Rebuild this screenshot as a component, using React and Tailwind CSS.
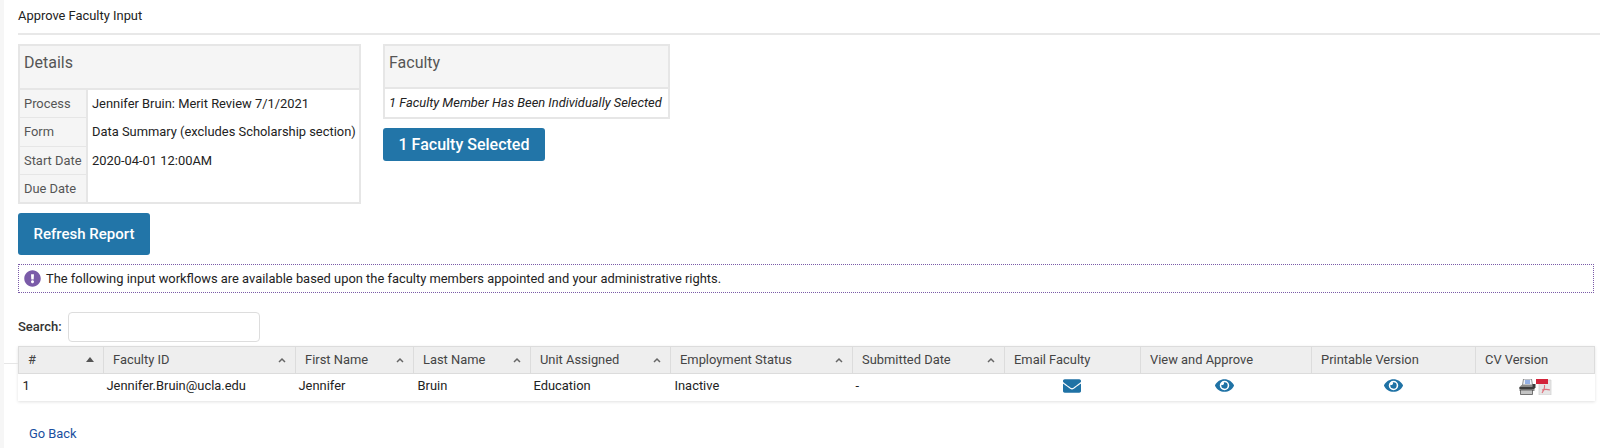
import { FaEnvelope, FaEye, FaExclamationCircle } from 'react-icons/fa';

const details = [
    ['Process', 'Jennifer Bruin: Merit Review 7/1/2021'],
    ['Form', 'Data Summary (excludes Scholarship section)'],
    ['Start Date', '2020-04-01 12:00AM'],
    ['Due Date', ''],
];

const columns = [
    { label: '#', width: 'w-[85px]', sort: 'active' },
    { label: 'Faculty ID', width: 'w-[192px]', sort: 'up' },
    { label: 'First Name', width: 'w-[118px]', sort: 'up' },
    { label: 'Last Name', width: 'w-[117px]', sort: 'up' },
    { label: 'Unit Assigned', width: 'w-[140px]', sort: 'up' },
    { label: 'Employment Status', width: 'w-[182px]', sort: 'up' },
    { label: 'Submitted Date', width: 'w-[152px]', sort: 'up' },
    { label: 'Email Faculty', width: 'w-[136px]' },
    { label: 'View and Approve', width: 'w-[171px]' },
    { label: 'Printable Version', width: 'w-[164px]' },
    { label: 'CV Version', width: 'w-[119px]' },
];

function PrinterIcon() {
    return (
        <svg width="18" height="16" viewBox="0 0 17 16">
            <path d="M5 0h8l1 6H4z" fill="#eef2f8" stroke="#666" strokeWidth="0.7" />
            <path d="M6.5 2h5M6.5 4h5" stroke="#3b6fd0" strokeWidth="1.2" />
            <path d="M1 8l2-2h11l2 2v4H1z" fill="#8a8a8a" />
            <path d="M14 5h3v4h-3z" fill="#3d3d3d" />
            <path d="M1 8h15v2H1z" fill="#3d3d3d" />
            <path d="M2 11h12v4.500H2z" fill="#c4c4c4" stroke="#444" strokeWidth="0.7" />
        </svg>
    );
}

function PdfIcon() {
    return (
        <svg width="16" height="16" viewBox="0 0 16 16">
            <path d="M3 1h12v15H3z" fill="#e6e6e6" stroke="#cfcfcf" strokeWidth="0.7" />
            <path d="M0 0h12v5H0z" fill="#d3233a" />
            <path d="M6 14c2-3 3-5 2.500-8M6 11c3-1 5-1 8 0" fill="none" stroke="#e0707c" strokeWidth="1.1" />
        </svg>
    );
}

function SortIcon({ sort }) {
    if (sort === 'active') {
        return <span className="w-0 h-0 border-x-[4px] border-x-transparent border-b-[5px] border-b-[#555]" />;
    }
    return (
        <svg width="8" height="6" viewBox="0 0 8 6">
            <path d="M1 5l3-3 3 3" fill="none" stroke="#666" strokeWidth="1.5" />
        </svg>
    );
}

export default function App() {
    return (
        <div className="relative h-[448px] overflow-hidden bg-white border-l-[4px] border-[#f6f6f6] pl-[14px] text-[12.9px] text-[#222] font-['Roboto',sans-serif]">
            {/* faint rule left of the table */}
            <div className="absolute left-0 top-[363px] w-[14px] h-px bg-[#e6e6e6]" />

            {/* Header */}
            <h1 className="h-[35px] pt-[8px] text-[12.9px] leading-[16px] border-b-2 border-[#e8e8e8]">Approve Faculty Input</h1>

            {/* Panels */}
            <div className="flex gap-[22px] mt-[9px] items-start">
                <table className="w-[343px] table-fixed border-2 border-[#e6e6e6] border-collapse">
                    <thead>
                        <tr>
                            <th className="w-[68px] h-[44px] bg-[#f5f5f5] border-b-2 border-[#e6e6e6] px-[4px] pb-[8px] text-left text-[16px] font-normal text-[#555]">Details</th>
                            <th className="bg-[#f5f5f5] border-b-2 border-[#e6e6e6]" />
                        </tr>
                    </thead>
                    <tbody>
                        {details.map(([label, value]) => (
                            <tr key={label} className="h-[28.5px]">
                                <td className="bg-[#f5f5f5] border-b border-r-2 border-[#e6e6e6] px-[4px] text-[#555] whitespace-nowrap">{label}</td>
                                <td className="px-[4px] whitespace-nowrap">{value}</td>
                            </tr>
                        ))}
                    </tbody>
                </table>
                <div className="w-[287px]">
                    <div className="border-2 border-[#e6e6e6]">
                        <div className="h-[43px] bg-[#f5f5f5] border-b-2 border-[#e6e6e6] px-[4px] pt-[5px] text-[16px] text-[#555]">Faculty</div>
                        <div className="h-[28px] px-[4px] leading-[28px] italic whitespace-nowrap">1 Faculty Member Has Been Individually Selected</div>
                    </div>
                    <button className="mt-[9px] w-[162px] h-[33px] rounded-[3px] bg-[#2275a8] text-white text-[16px] font-medium">1 Faculty Selected</button>
                </div>
            </div>

            <button className="block mt-[9px] w-[132px] h-[42px] rounded-[3px] bg-[#2275a8] text-white text-[15px] font-medium">Refresh Report</button>

            {/* Info */}
            <div className="mt-[9px] w-[1576px] h-[29px] border border-dotted border-[#7a5ba8] flex items-center gap-[5px] pl-[5px]">
                <FaExclamationCircle className="text-[#7a5ba8] text-[17px]" />
                <span>The following input workflows are available based upon the faculty members appointed and your administrative rights.</span>
            </div>

            {/* Search */}
            <div className="flex items-center gap-[6px] mt-[19px] h-[30px]">
                <label className="text-[13px] font-medium text-[#333]">Search:</label>
                <input className="w-[192px] h-[30px] border border-[#ddd] rounded-[4px] bg-white" />
            </div>

            {/* Table */}
            <table className="mt-[4px] w-[1576px] table-fixed border-collapse shadow-[0_1px_3px_rgba(0,0,0,0.12)]">
                <thead>
                    <tr className="h-[27px] bg-[#eeeeee]">
                        {columns.map((col) => (
                            <th key={col.label} className={`${col.width} border border-[#dcdcdc] px-[9px] text-left font-normal text-[#444]`}>
                                <div className="flex items-center justify-between">
                                    <span>{col.label}</span>
                                    {col.sort && <SortIcon sort={col.sort} />}
                                </div>
                            </th>
                        ))}
                    </tr>
                </thead>
                <tbody>
                    <tr className="h-[27px]">
                        <td className="px-[4px] pb-[3px]">1</td>
                        <td className="px-[3px] pb-[3px]">Jennifer.Bruin@ucla.edu</td>
                        <td className="px-[3px] pb-[3px]">Jennifer</td>
                        <td className="px-[4px] pb-[3px]">Bruin</td>
                        <td className="px-[3px] pb-[3px]">Education</td>
                        <td className="px-[4px] pb-[3px]">Inactive</td>
                        <td className="px-[3px] pb-[3px]">-</td>
                        <td className="pb-[3px] pr-[1px]"><FaEnvelope className="mx-auto text-[#1f72a5] text-[18px]" /></td>
                        <td className="pb-[3px] pr-[3px]"><FaEye className="mx-auto text-[#1f72a5] text-[19px]" /></td>
                        <td className="pb-[3px]"><FaEye className="mx-auto text-[#1f72a5] text-[19px]" /></td>
                        <td>
                            <div className="flex justify-center">
                                <PrinterIcon />
                                <PdfIcon />
                            </div>
                        </td>
                    </tr>
                </tbody>
            </table>

            <a className="block mt-[23px] ml-[11px] text-[#1a4fa0]">Go Back</a>
        </div>
    );
}
